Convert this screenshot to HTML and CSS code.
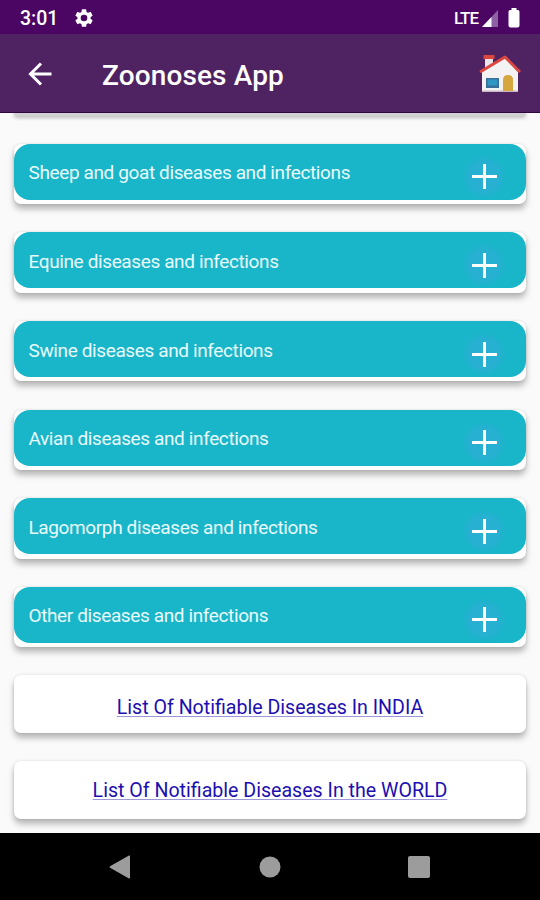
FILE: index.html
```html
<!DOCTYPE html>
<html lang="en">
<head>
    <meta charset="UTF-8">
    <meta name="viewport" content="width=device-width, initial-scale=1.0">
    <title>Zoonoses App</title>
    <link rel="stylesheet" href="styles.css">
</head>
<body>
    <div class="status-bar">
        <span class="time">3:01</span>
        <svg class="gear" width="22" height="22" viewBox="0 0 24 24"><path fill="#fff" d="M19.14 12.94c.04-.3.06-.61.06-.94s-.02-.64-.07-.94l2.03-1.58a.49.49 0 0 0 .12-.61l-1.92-3.32a.49.49 0 0 0-.59-.22l-2.39.96a7 7 0 0 0-1.62-.94l-.36-2.54a.48.48 0 0 0-.48-.41h-3.84a.48.48 0 0 0-.47.41l-.36 2.54c-.59.24-1.13.57-1.62.94l-2.39-.96a.49.49 0 0 0-.59.22L2.74 8.87a.48.48 0 0 0 .12.61l2.03 1.58a7.4 7.4 0 0 0 0 1.88l-2.03 1.58a.49.49 0 0 0-.12.61l1.92 3.32c.12.22.37.29.59.22l2.39-.96c.5.38 1.03.7 1.62.94l.36 2.54c.05.24.24.41.48.41h3.84c.24 0 .44-.17.47-.41l.36-2.54c.59-.24 1.13-.56 1.62-.94l2.39.96c.22.08.47 0 .59-.22l1.92-3.32a.48.48 0 0 0-.12-.61zM12 15.6a3.6 3.6 0 1 1 0-7.2 3.6 3.6 0 0 1 0 7.2z"/></svg>
        <span class="network">LTE</span>
        <svg class="signal" width="16" height="17" viewBox="0 0 16 17"><path fill="#8d62a4" d="M16 0v17H0z"/><path fill="#fff" d="M9.5 7v10H0z"/></svg>
        <svg class="battery" width="12" height="20" viewBox="0 0 12 20"><path fill="#fff" d="M3.500 0h5v2H10q1.500 0 1.500 2v13.500q0 2-2 2H2.500q-2 0-2-2V4q0-2 1.500-2h1.500z"/></svg>
    </div>

    <div class="toolbar">
        <svg class="back" width="24" height="24" viewBox="0 0 24 24"><path fill="none" stroke="#fff" stroke-width="3" d="M23.500 12H2.500M13 1.500 2.500 12 13 22.500"/></svg>
        <h1>Zoonoses App</h1>
        <svg class="house" width="42" height="38" viewBox="0 0 42 38">
            <path fill="#e9e4ea" d="M6 3h8v14H6z"/>
            <path fill="#d9473f" d="M4.500 0h11v4h-11z"/>
            <path fill="#f4f2f3" d="M3 16 26 3l13 14v20H3z"/>
            <path fill="#c9b9c6" d="M3 35.500h36V37H3z"/>
            <path fill="none" stroke="#dc473f" stroke-width="3" stroke-linejoin="round" d="M1 17 26 2l15 15"/>
            <path fill="#3a6f97" d="M7 23h13v10H7z"/>
            <path fill="#2f97c4" d="M8.500 24.500h10v6h-10z"/>
            <path fill="#d6a63f" d="M24 36V25q0-5 5-5t5 5v11z"/>
        </svg>
    </div>

    <div class="list">
        <div class="card card-cut"></div>
        <div class="card"><div class="group"><span>Sheep and goat diseases and infections</span><i class="plus"></i></div></div>
        <div class="card"><div class="group"><span>Equine diseases and infections</span><i class="plus"></i></div></div>
        <div class="card"><div class="group"><span>Swine diseases and infections</span><i class="plus"></i></div></div>
        <div class="card"><div class="group"><span>Avian diseases and infections</span><i class="plus"></i></div></div>
        <div class="card"><div class="group"><span>Lagomorph diseases and infections</span><i class="plus"></i></div></div>
        <div class="card"><div class="group"><span>Other diseases and infections</span><i class="plus"></i></div></div>
        <div class="card card-link"><a href="#">List Of Notifiable Diseases In INDIA</a></div>
        <div class="card card-link"><a href="#">List Of Notifiable Diseases In the WORLD</a></div>
    </div>

    <div class="nav-bar">
        <svg width="22" height="24" viewBox="0 0 22 24"><path fill="#9c9c9c" d="M20 .600q1-.6 1 .6v21.600q0 1.200-1 .6L1 12.800q-1-.8 0-1.600z"/></svg>
        <svg width="22" height="22" viewBox="0 0 22 22"><circle cx="11" cy="11" r="10.500" fill="#9c9c9c"/></svg>
        <svg width="22" height="22" viewBox="0 0 22 22"><rect width="22" height="22" rx="2" fill="#9c9c9c"/></svg>
    </div>
</body>
</html>
```
FILE: styles.css
```css
* {
    box-sizing: border-box;
}
body {
    margin: 0;
    height: 900px;
    display: flex;
    flex-direction: column;
    overflow: hidden;
    background: #fafafa;
    font-family: Roboto, sans-serif;
}
svg {
    display: block;
    flex: none;
}
.status-bar {
    height: 34px;
    flex: none;
    display: flex;
    align-items: center;
    padding: 2px 20px 0;
    background: #4b0664;
    color: #fff;
}
.time {
    width: 53px;
    font-size: 19.5px;
    font-weight: 500;
}
.network {
    margin-left: auto;
    margin-right: 4px;
    font-size: 17px;
    font-weight: 500;
    letter-spacing: -1px;
}
.battery {
    margin-left: 10px;
}
.toolbar {
    height: 79px;
    flex: none;
    display: flex;
    align-items: center;
    padding: 2px 19px 0 28px;
    background: #4f2262;
    border-bottom: 1px solid #2e0640;
    color: #fff;
}
.toolbar h1 {
    margin: 3px auto 0 50px;
    font-size: 28px;
    font-weight: 500;
    letter-spacing: 0.12px;
}
.list {
    height: 720px;
    flex: none;
    display: flex;
    flex-direction: column;
    gap: 28.3px;
    padding: 0 14px;
    overflow: hidden;
}
.card {
    height: 60.3px;
    flex: none;
    background: #fff;
    border-radius: 7px;
    box-shadow: 0 5px 6px rgba(0,0,0,0.27), 0 0 3px rgba(0,0,0,0.12);
}
.card-cut {
    height: 2.6px;
    background: #d0d0d0;
    border-radius: 0 0 7px 7px;
    box-shadow: 0 1px 4px rgba(0,0,0,0.4);
}
.group {
    height: 56px;
    display: flex;
    align-items: center;
    justify-content: space-between;
    padding: 0 20px 0 14.5px;
    border-radius: 16px;
    background: #19b5c9;
    color: #e9fbfd;
    font-size: 19px;
    letter-spacing: -0.38px;
}
.group span {
    margin-top: 2px;
}
.plus {
    width: 44px;
    height: 44px;
    margin-top: 10px;
    border-radius: 50%;
    background:
        linear-gradient(#fff, #fff) center / 25px 3px no-repeat,
        linear-gradient(#fff, #fff) center / 3px 25px no-repeat,
        radial-gradient(closest-side, #27b0d2 65%, #19b5c9);
}
.card-link {
    height: 58px;
    display: flex;
    align-items: center;
    justify-content: center;
    padding-top: 6px;
}
.card-link + .card-link {
    margin-top: -0.6px;
    padding-top: 0;
}
.card-link a {
    color: #1c0fb0;
    font-size: 19.6px;
    text-decoration-color: #9d98d8;
    text-decoration-thickness: 1px;
    text-decoration-skip-ink: none;
    text-underline-offset: 2px;
}
.nav-bar {
    height: 67px;
    flex: none;
    display: flex;
    align-items: center;
    justify-content: space-between;
    padding: 0 110px 0 109px;
    background: #000;
}
```
